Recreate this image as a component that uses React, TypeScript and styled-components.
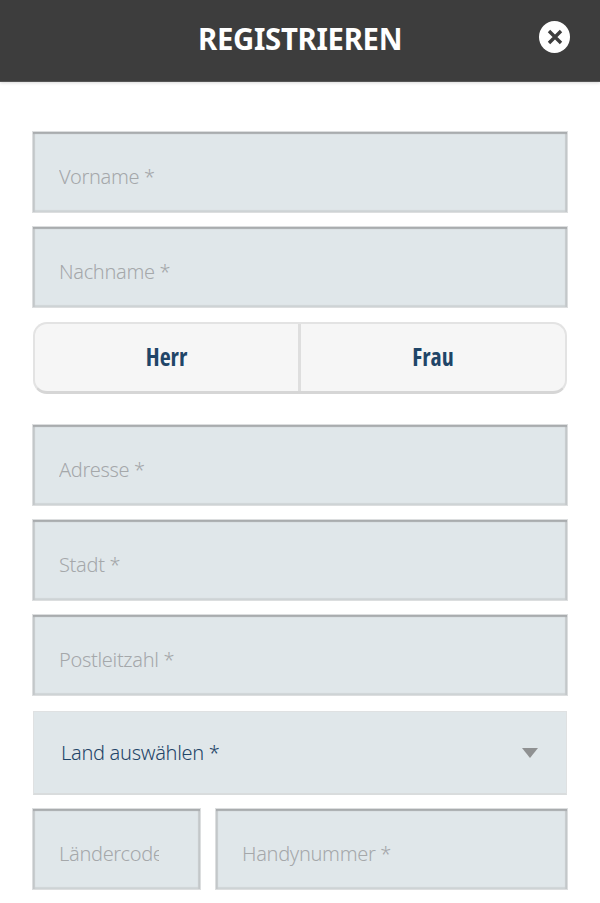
import React from "react";
import styled, { createGlobalStyle } from "styled-components";

const GlobalStyle = createGlobalStyle`
  html, body {
    margin: 0;
    padding: 0;
    background: #fff;
  }
  * {
    box-sizing: border-box;
  }
`

const Page = styled.div`
  width: 600px;
  height: 903px;
  overflow: hidden;
  font-family: "Noto Sans", "Open Sans", sans-serif;
`

const Header = styled.header`
  position: relative;
  height: 82px;
  padding-bottom: 5px;
  display: flex;
  align-items: center;
  justify-content: center;
  background: #3d3d3d;
  border-bottom: 1px solid #555;
  box-shadow: 0 1px 3px rgba(0, 0, 0, .15);
`

const Title = styled.h1`
  margin: 0;
  color: #fff;
  font-size: 31px;
  font-weight: 700;
  letter-spacing: -0.3px;
  transform: scaleX(.945);
`

const CloseButton = styled.button`
  position: absolute;
  top: 21px;
  right: 30px;
  width: 31px;
  height: 32px;
  padding: 0;
  border: 0;
  border-radius: 50%;
  background: #fff;
  display: flex;
  align-items: center;
  justify-content: center;
`

const Form = styled.form`
  display: flex;
  flex-direction: column;
  padding: 49px 32px 0;
`

const Input = styled.input<{ $mb?: number, $pr?: number }>`
  display: block;
  width: 100%;
  min-width: 0;
  height: 82px;
  margin-bottom: ${p => p.$mb ?? 13}px;
  padding: 8px ${p => p.$pr ?? 26}px 0 26px;
  border: 1px solid #dcdedf;
  border-radius: 0;
  outline: none;
  background: #e0e7ea;
  box-shadow: inset 0 2px 1px #a9acae, inset 2px 0 1px #c6cacc, inset -2px 0 1px #c6cacc, inset 0 -2px 1px #d0d5d7;
  font-family: inherit;
  font-size: 20px;
  font-weight: 300;

  &::placeholder {
    color: #a5a8aa;
    opacity: 1;
    letter-spacing: -0.32px;
  }
`

const Toggle = styled.div`
  display: grid;
  grid-template-columns: 266px 1fr;
  height: 72px;
  margin: 1px 1px 30px;
  border: 2px solid #e3e3e3;
  border-bottom-width: 3px;
  border-bottom-color: #d6d6d6;
  border-radius: 14px;
  background: #f6f6f6;
  overflow: hidden;
`

const ToggleOption = styled.button<{ $divider?: boolean }>`
  border: 0;
  border-right: ${p => (p.$divider ? "3px solid #dedede" : "0")};
  background: transparent;
  color: #1f4568;
  font-family: "Open Sans", sans-serif;
  font-size: 24px;
  font-weight: 700;
  font-stretch: 75%;
  padding: 0 0 3px;
`

const SelectBox = styled.div`
  display: flex;
  align-items: center;
  justify-content: space-between;
  height: 84px;
  margin: 2px 1px 13px;
  padding: 0 28px 0 27px;
  border: 1px solid #dfe1e2;
  border-bottom: 2px solid #d9dcdd;
  background: #e0e7ea;
  color: #1f4568;
  font-size: 20px;
  font-weight: 300;
  letter-spacing: -0.3px;
`

const Caret = styled.span`
  width: 0;
  height: 0;
  border-left: 8.5px solid transparent;
  border-right: 8.5px solid transparent;
  border-top: 10px solid #8f9192;
`

const PhoneRow = styled.div`
  display: grid;
  grid-template-columns: 169px 1fr;
  column-gap: 14px;
`

const App: React.FC = () => {
  return <Page>
    <GlobalStyle />
    <Header>
      <Title>REGISTRIEREN</Title>
      <CloseButton type="button" aria-label="Schließen">
        <svg width="20" height="20" viewBox="0 0 20 20">
          <path d="M4 4 L16 16 M16 4 L4 16" stroke="#3d3d3d" strokeWidth="3.4" />
        </svg>
      </CloseButton>
    </Header>
    <Form>
      <Input placeholder="Vorname *" />
      <Input placeholder="Nachname *" />
      <Toggle>
        <ToggleOption type="button" $divider>Herr</ToggleOption>
        <ToggleOption type="button">Frau</ToggleOption>
      </Toggle>
      <Input placeholder="Adresse *" />
      <Input placeholder="Stadt *" />
      <Input placeholder="Postleitzahl *" />
      <SelectBox>
        <span>Land auswählen *</span>
        <Caret />
      </SelectBox>
      <PhoneRow>
        <Input placeholder="Ländercode *" $mb={0} $pr={41} />
        <Input placeholder="Handynummer *" $mb={0} />
      </PhoneRow>
    </Form>
  </Page>
}

export default App
